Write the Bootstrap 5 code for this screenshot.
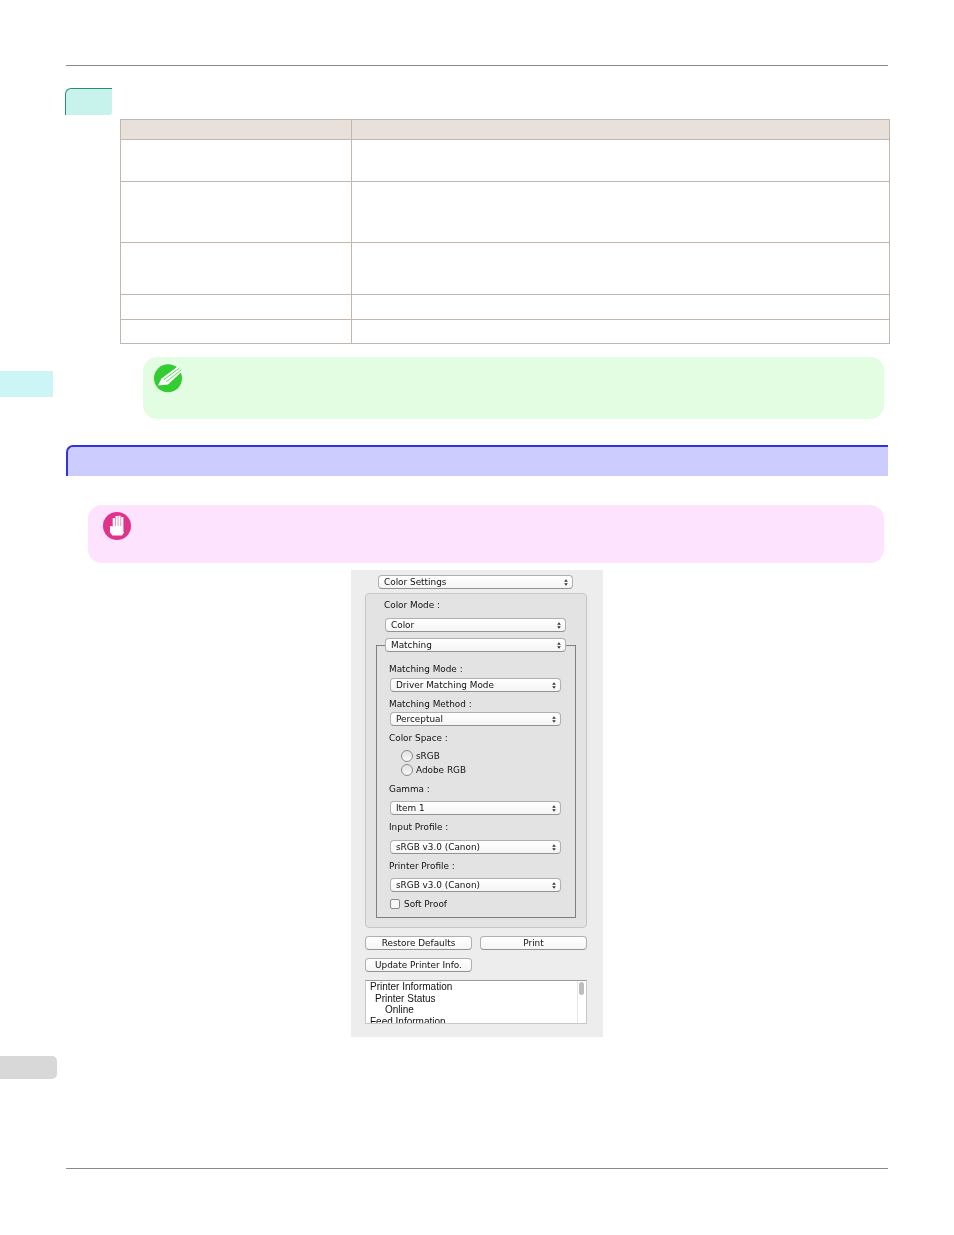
<!DOCTYPE html>
<html lang="en">
<head>
<meta charset="utf-8">
<title>Color Settings</title>
<link href="https://cdn.jsdelivr.net/npm/bootstrap@5.3.0/dist/css/bootstrap.min.css" rel="stylesheet">
<style>
body{background:#fff;margin:0;height:1235px;position:relative;overflow:hidden}
.sheet{padding:65px 66px 0 66px;width:954px}
.rule-line{height:1px;background:#8a8a8a}
.teal-head{width:47px;height:27px;margin:22px 0 0 -1px;background:#c8f2ec;border-top:1px solid #2b8a80;border-left:1px solid #2b8a80;border-radius:6px 0 3px 0}
.spec-table{width:770px;margin:4px 0 0 54px;border-collapse:collapse;table-layout:fixed}
.spec-table td,.spec-table th{border:1px solid #c2b6ad;padding:0;background:#fff}
.spec-table th{background:#e8e0db}
.c-a{width:231px}
.r20{height:20px}.r42{height:42px}.r61{height:61px}.r52{height:52px}.r25{height:25px}.r24{height:24px}
.note-box{margin:13px 4px 0 77px;height:62px;background:#e3fde3;border-radius:14px;padding:7px 0 0 11px}
.blue-head{height:31px;margin-top:26px;background:#ccccff;border-top:2px solid #3333dd;border-left:2px solid #3333dd;border-top-left-radius:7px}
.pink-box{margin:29px 4px 0 22px;height:58px;background:#fde3fd;border-radius:14px;padding:7px 0 0 15px}
.round-icon{display:block;width:29px;height:29px}
.dlg{width:252px;height:467px;margin:7px auto 0;padding:5px 0 0 14px;background:#ededed;filter:blur(.35px);font:8.9px/14px "DejaVu Sans",sans-serif;color:#111}
.msel{height:14px;background:linear-gradient(#fff,#f5f5f5);border:1px solid #b0b0b0;border-bottom-color:#929292;border-radius:4px;padding-left:5px;line-height:12px;white-space:nowrap}
.msel svg{width:4px;height:7px;margin-right:4px;flex:none}
.w195{width:195px;margin-left:13px}
.w181{width:181px}.w171{width:171px}
.pane{width:222px;height:335px;margin-top:4px;background:#e3e3e3;border:1px solid #c6c6c6;border-radius:4px}
.frame{width:200px;height:273px;margin:13px 0 0 10px;border:1px solid #7f7f7f;background:#e3e3e3}
.il8{margin-left:8px}.il12{margin-left:12px}.il13{margin-left:13px}.il18{margin-left:18px}.il19{margin-left:19px}.il24{margin-left:24px}
.dy-m8{margin-top:-8px}.dy0{margin-top:0}.dy1{margin-top:1px}.dy2{margin-top:2px}.dy4{margin-top:4px}.dy5{margin-top:5px}.dy6{margin-top:6px}.dy8{margin-top:8px}.dy10{margin-top:10px}
.dlab{height:14px;white-space:nowrap}
.radio-dot{width:12px;height:12px;border-radius:50%;border:1px solid #8a8a8a;background:linear-gradient(#e2e2e2,#f8f8f8);margin-right:3px;flex:none}
.check-box{width:10px;height:10px;border-radius:2px;border:1px solid #8a8a8a;background:#f8f8f8;margin:0 4px 0 0;flex:none}
.mbtn{width:107px;height:14px;background:linear-gradient(#fff,#f5f5f5);border:1px solid #b0b0b0;border-bottom-color:#929292;border-radius:4px;line-height:12px;text-align:center}
.info-list{width:222px;height:44px;overflow:hidden;background:#fff;border:1px solid #c8c8c8;border-top-color:#9a9a9a;padding:0 0 0 4px;font:10px/11.7px "Liberation Sans",sans-serif;color:#111;position:relative}
.in5{padding-left:5px}.in15{padding-left:15px}
.thumb{position:absolute;top:1px;right:2px;width:5px;height:13px;border-radius:3px;background:#bdbdbd}
.scroll-edge{position:absolute;top:0;bottom:0;right:8px;width:1px;background:#e6e6e6}
.side-teal{position:absolute;left:0;top:371px;width:53px;height:26px;background:#ccf5f5}
.side-gray{position:absolute;left:0;top:1056px;width:57px;height:23px;background:#d8d8d8;border-radius:0 5px 5px 0}
.foot-line{margin-top:131px}
</style>
</head>
<body>
<svg class="d-none">
  <symbol id="updown" viewBox="0 0 5 8"><path d="M2.500 0 4.800 3H.2zM2.500 8 .2 5h4.600z" fill="#333"/></symbol>
</svg>
<div class="side-teal"></div>
<div class="side-gray"></div>
<div class="sheet">
  <div class="rule-line"></div>
  <div class="teal-head"></div>
  <table class="spec-table">
    <colgroup><col class="c-a"><col></colgroup>
    <tr class="r20"><th></th><th></th></tr>
    <tr class="r42"><td></td><td></td></tr>
    <tr class="r61"><td></td><td></td></tr>
    <tr class="r52"><td></td><td></td></tr>
    <tr class="r25"><td></td><td></td></tr>
    <tr class="r24"><td></td><td></td></tr>
  </table>
  <div class="note-box">
    <svg class="round-icon" viewBox="0 0 29 29">
      <circle cx="14" cy="14.300" r="14" fill="#33cc33"/>
      <path d="M4 21.500 7.500 14.500 24.500 2 29 6.500 14 20.500Z" fill="#fff"/>
      <path d="M9.800 15.700 25.800 3.800M12 18 27.400 5.700" stroke="#33cc33" stroke-width=".8" fill="none"/>
    </svg>
  </div>
  <div class="blue-head"></div>
  <div class="pink-box">
    <svg class="round-icon" viewBox="0 0 29 29">
      <circle cx="14" cy="14" r="14" fill="#e0338c"/>
      <path d="M7 14 9.700 14.500V6h2.300V14h.5V4h2.300V14h.5V3.800h2.300V14h.5V5h2.300V19.500L21 20.500 19 23.500H9.500L7 20.500Z" fill="#fff"/>
    </svg>
  </div>
  <div class="dlg">
    <div class="msel w195 d-flex align-items-center justify-content-between">Color Settings<svg><use href="#updown"/></svg></div>
    <div class="pane">
      <div class="dlab il18 dy4">Color Mode :</div>
      <div class="msel w181 il19 dy6 d-flex align-items-center justify-content-between">Color<svg><use href="#updown"/></svg></div>
      <div class="frame">
        <div class="msel w181 il8 dy-m8 d-flex align-items-center justify-content-between">Matching<svg><use href="#updown"/></svg></div>
        <div class="dlab il12 dy10">Matching Mode :</div>
        <div class="msel w171 il13 dy2 d-flex align-items-center justify-content-between">Driver Matching Mode<svg><use href="#updown"/></svg></div>
        <div class="dlab il12 dy5">Matching Method :</div>
        <div class="msel w171 il13 dy1 d-flex align-items-center justify-content-between">Perceptual<svg><use href="#updown"/></svg></div>
        <div class="dlab il12 dy5">Color Space :</div>
        <div class="dlab il24 dy4 d-flex align-items-center"><span class="radio-dot"></span>sRGB</div>
        <div class="dlab il24 dy0 d-flex align-items-center"><span class="radio-dot"></span>Adobe RGB</div>
        <div class="dlab il12 dy5">Gamma :</div>
        <div class="msel w171 il13 dy5 d-flex align-items-center justify-content-between">Item 1<svg><use href="#updown"/></svg></div>
        <div class="dlab il12 dy5">Input Profile :</div>
        <div class="msel w171 il13 dy6 d-flex align-items-center justify-content-between">sRGB v3.0 (Canon)<svg><use href="#updown"/></svg></div>
        <div class="dlab il12 dy5">Printer Profile :</div>
        <div class="msel w171 il13 dy5 d-flex align-items-center justify-content-between">sRGB v3.0 (Canon)<svg><use href="#updown"/></svg></div>
        <div class="dlab il13 dy5 d-flex align-items-center"><span class="check-box"></span>Soft Proof</div>
      </div>
    </div>
    <div class="d-flex gap-2 dy8">
      <div class="mbtn">Restore Defaults</div>
      <div class="mbtn">Print</div>
    </div>
    <div class="mbtn dy8">Update Printer Info.</div>
    <div class="info-list dy8">
      <div>Printer Information</div>
      <div class="in5">Printer Status</div>
      <div class="in15">Online</div>
      <div>Feed Information</div>
      <span class="scroll-edge"></span>
      <span class="thumb"></span>
    </div>
  </div>
  <div class="rule-line foot-line"></div>
</div>
</body>
</html>
